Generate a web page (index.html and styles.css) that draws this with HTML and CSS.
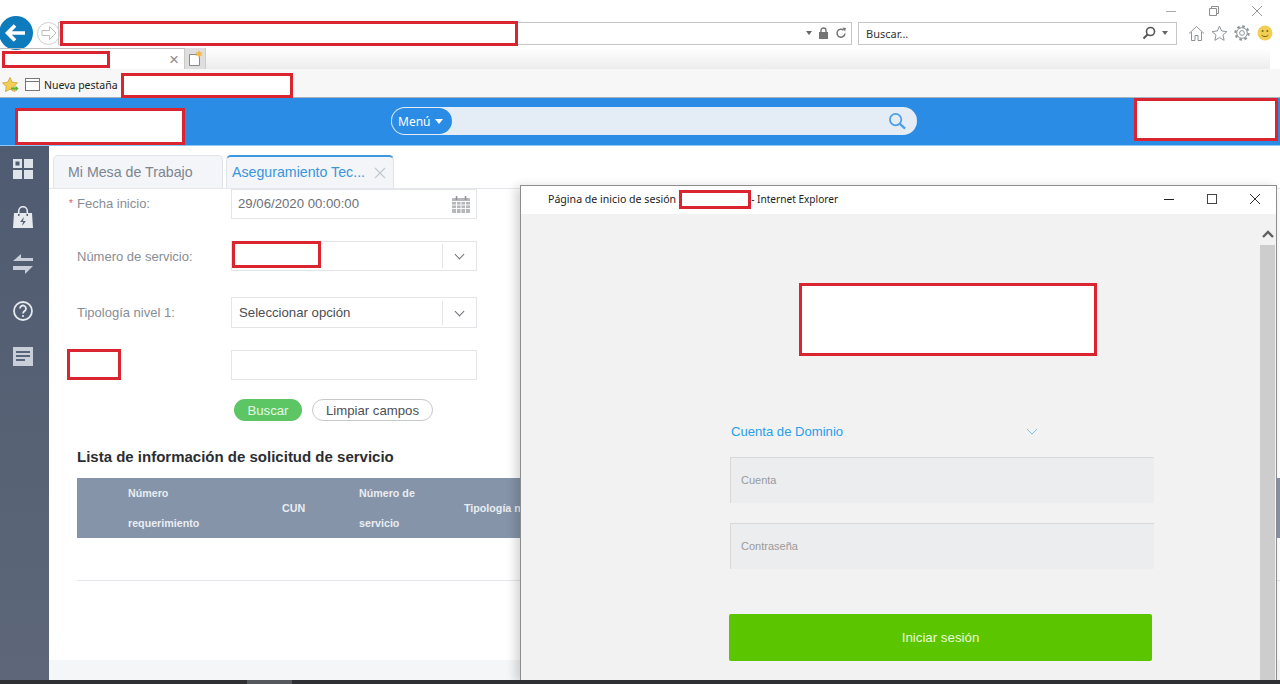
FILE: index.html
```html
<!DOCTYPE html>
<html lang="es">
<head>
<meta charset="utf-8">
<title>Aseguramiento Técnico</title>
<link rel="stylesheet" href="styles.css">
</head>
<body>
<div class="page">
  <header class="browser">
    <div class="win-row">
      <svg class="win-ic" width="12" height="12" viewBox="0 0 12 12"><path d="M1 6.5h10" stroke="#a9a9a9" fill="none"/></svg>
      <svg class="win-ic" width="12" height="12" viewBox="0 0 12 12"><path d="M1.5 3.5h7v7h-7zM3.5 3.5v-2h7v7h-2" stroke="#8e8e8e" fill="none"/></svg>
      <svg class="win-ic" width="12" height="12" viewBox="0 0 12 12"><path d="M1 1l10 10M11 1L1 11" stroke="#9a9a9a" fill="none"/></svg>
    </div>
    <div class="nav-row">
      <div class="back"><svg width="24" height="20" viewBox="0 0 24 20"><path d="M11 2.5L3.5 10l7.5 7.5M4 10h17" stroke="#fff" stroke-width="3.6" fill="none"/></svg></div>
      <div class="forward"><svg width="18" height="16" viewBox="0 0 18 16"><path d="M9.500 1.500L16 8l-6.500 6.500v-4H2v-5h7.500z" stroke="#bdbdbd" fill="none"/></svg></div>
      <div class="address">
        <span class="tri"></span>
        <svg width="11" height="12" viewBox="0 0 11 12"><path d="M3 5V3.500a2.500 2.500 0 0 1 5 0V5" stroke="#757575" stroke-width="1.4" fill="none"/><rect x="1" y="5" width="9" height="7" fill="#757575"/></svg>
        <svg width="12" height="12" viewBox="0 0 12 12"><path d="M10 6.500a4 4 0 1 1-1.400-3.400" stroke="#757575" stroke-width="1.5" fill="none"/><path d="M7.500 0.500l3.500 0.500-1 3.600z" fill="#757575"/></svg>
      </div>
      <div class="search-box">
        <span class="search-label">Buscar...</span>
        <svg width="14" height="14" viewBox="0 0 14 14"><circle cx="8.500" cy="5.500" r="4" stroke="#555" stroke-width="1.6" fill="none"/><path d="M5.500 8.500L1.500 12.500" stroke="#555" stroke-width="2"/></svg>
        <span class="tri"></span>
      </div>
      <div class="tools">
        <svg width="17" height="17" viewBox="0 0 17 17"><path d="M1 8.500L8.500 1.500 16 8.500M3.500 7v8.500h3.500v-5h3v5h3.500V7" stroke="#8d9499" fill="none"/></svg>
        <svg width="17" height="17" viewBox="0 0 17 17"><path d="M8.500 1.200l2.200 4.800 5.200.6-3.900 3.500 1.100 5.200-4.600-2.700-4.600 2.700 1.100-5.200L1.100 6.600l5.200-.6z" stroke="#8d9499" fill="none"/></svg>
        <svg width="16" height="16" viewBox="0 0 16 16"><circle cx="8" cy="8" r="6.600" stroke="#8d9499" stroke-width="2.200" stroke-dasharray="2.600 2.580" fill="none"/><circle cx="8" cy="8" r="5.300" stroke="#8d9499" fill="#fff"/><circle cx="8" cy="8" r="2.400" stroke="#8d9499" fill="none"/></svg>
        <svg width="16" height="16" viewBox="0 0 16 16"><circle cx="8" cy="8" r="7.500" fill="#f2cf52"/><circle cx="5.600" cy="6" r="1" fill="#7a6a20"/><circle cx="10.400" cy="6" r="1" fill="#7a6a20"/><path d="M4.500 10c1.500 2 5.500 2 7 0" stroke="#7a6a20" fill="none"/></svg>
      </div>
    </div>
    <div class="tab-row">
      <div class="tab"><span class="tab-close">×</span></div>
      <div class="tab-new"><svg width="15" height="17" viewBox="0 0 15 17"><path d="M1.500 4.500h10v11h-10z" fill="#fff" stroke="#8a8a8a"/><path d="M11 0l1 2.500 2.500-.5-1.500 2 1.500 2-2.500-.5-1 2.500-1-2.500-2.500.5 1.500-2-1.500-2 2.500.5z" fill="#f5b73c"/></svg></div>
      <div class="tab-fill"></div>
    </div>
    <div class="fav-row">
      <svg width="17" height="16" viewBox="0 0 17 16"><path d="M8 .5l2.300 4.700 5.200.7-3.800 3.600.9 5.100L8 12.200 3.400 14.600l.9-5.100L.5 5.900l5.200-.7z" fill="#f4cd55" stroke="#c79a2b" stroke-width=".7"/><path d="M9 10.500h4.500V8.500l3 3-3 3v-2H9z" fill="#5cb531"/></svg>
      <svg class="fav-page" width="15" height="13" viewBox="0 0 15 13"><rect x=".5" y=".5" width="14" height="12" fill="#fff" stroke="#777"/><path d="M.5 3.500h14" stroke="#777"/></svg>
      <span class="fav-text">Nueva pestaña</span>
    </div>
  </header>

  <div class="app-head">
    <div class="omni">
      <div class="menu-pill">Menú <span class="menu-tri"></span></div>
      <svg width="19" height="19" viewBox="0 0 20 20"><circle cx="8" cy="8" r="6" stroke="#4a9fe8" stroke-width="1.800" fill="none"/><path d="M12.500 12.500L18 17.500" stroke="#4a9fe8" stroke-width="2.400"/></svg>
    </div>
  </div>

  <div class="app-body">
    <nav class="side">
      <svg width="20" height="20" viewBox="0 0 20 20"><path d="M0 0h9v9H0zM2.500 2.500v4h4v-4zM11 0h9v9h-9zM0 11h9v9H0zM11 11h9v9h-9z" fill="#dfe3ea" fill-rule="evenodd"/></svg>
      <svg width="20" height="22" viewBox="0 0 20 22"><path d="M1 7h4v3h1.500V7h7v3H15V7h4l1 15H0z" fill="#e6e9ee"/><path d="M5.700 8V5a4.300 4.300 0 0 1 8.600 0v3" stroke="#e6e9ee" stroke-width="1.600" fill="none"/><path d="M11 11l-4 5h3l-1 4 4-5h-3z" fill="#58647a"/></svg>
      <svg width="20" height="20" viewBox="0 0 20 20"><path d="M8 0v4h12v3H0zM0 12h20l-8 8v-4H0z" fill="#c9ced8"/></svg>
      <svg width="20" height="20" viewBox="0 0 20 20"><circle cx="10" cy="10" r="9" stroke="#e6e9ee" stroke-width="1.800" fill="none"/><path d="M7 7.500a3 3 0 1 1 4.500 2.600c-1 .6-1.500 1-1.500 2.400" stroke="#e6e9ee" stroke-width="1.800" fill="none"/><circle cx="10" cy="15" r="1.100" fill="#e6e9ee"/></svg>
      <svg width="20" height="19" viewBox="0 0 20 19"><rect width="20" height="19" fill="#c9ced8"/><path d="M3 5h14M3 9h14M3 13h9" stroke="#58647a" stroke-width="1.800"/></svg>
    </nav>
    <main class="content">
      <div class="tabs">
        <div class="sub-tab">Mi Mesa de Trabajo</div>
        <div class="sub-tab sub-tab-active">Aseguramiento Tec...<svg width="12" height="12" viewBox="0 0 12 12"><path d="M1 1l10 10M11 1L1 11" stroke="#c3c8cf" stroke-width="1.200" fill="none"/></svg></div>
      </div>
      <form class="form">
        <div class="row row-date">
          <label class="lbl"><span class="req">*</span>Fecha inicio:</label>
          <div class="field field-date"><span>29/06/2020 00:00:00</span>
            <svg width="18" height="17" viewBox="0 0 18 17"><rect y="2" width="18" height="15" rx="1" fill="#b5b7ba"/><path d="M4.500 0v4M13.500 0v4" stroke="#8f9195" stroke-width="1.500"/><path d="M0 5.500h18M0 9h18M0 12.500h18M4.500 5v12M9 5v12M13.500 5v12" stroke="#fff" stroke-width=".9"/></svg>
          </div>
        </div>
        <div class="row row-num">
          <label class="lbl">Número de servicio:</label>
          <div class="field field-select"><span></span><i class="chev"></i></div>
        </div>
        <div class="row row-tip">
          <label class="lbl">Tipología nivel 1:</label>
          <div class="field field-select"><span class="sel-text">Seleccionar opción</span><i class="chev"></i></div>
        </div>
        <div class="row row-blank">
          <label class="lbl"></label>
          <div class="field"></div>
        </div>
        <div class="btns">
          <button type="button" class="btn-go">Buscar</button>
          <button type="button" class="btn-clear">Limpiar campos</button>
        </div>
      </form>
      <h2 class="list-title">Lista de información de solicitud de servicio</h2>
      <div class="thead">
        <div class="th th-first">Número<br>requerimiento</div>
        <div class="th">CUN</div>
        <div class="th">Número de<br>servicio</div>
        <div class="th th-last">Tipología nivel 2</div>
      </div>
      <div class="tbody"></div>
      <div class="foot"></div>
    </main>
  </div>
  <div class="taskbar"><span class="task-thumb"></span></div>

  <section class="login">
    <div class="login-title">
      <span class="login-caption">Página de inicio de sesión</span>
      <span class="login-caption login-caption-2">- Internet Explorer</span>
      <div class="login-win">
        <svg width="12" height="12" viewBox="0 0 12 12"><path d="M1 6.500h10" stroke="#222" fill="none"/></svg>
        <svg width="12" height="12" viewBox="0 0 12 12"><rect x="1.500" y="1.500" width="9" height="9" stroke="#444" fill="none"/></svg>
        <svg width="12" height="12" viewBox="0 0 12 12"><path d="M1 1l10 10M11 1L1 11" stroke="#333" fill="none"/></svg>
      </div>
    </div>
    <div class="login-body">
      <div class="login-form">
        <div class="domain"><span>Cuenta de Dominio</span><svg width="12" height="7" viewBox="0 0 12 7"><path d="M1 1l5 5 5-5" stroke="#7cc0ec" fill="none"/></svg></div>
        <div class="login-input">Cuenta</div>
        <div class="login-input login-input-2">Contraseña</div>
        <button type="button" class="login-btn">Iniciar sesión</button>
      </div>
      <div class="scroll">
        <svg width="12" height="8" viewBox="0 0 12 8"><path d="M1 7l5-5 5 5" stroke="#606060" stroke-width="2.400" fill="none"/></svg>
        <div class="scroll-thumb"></div>
      </div>
    </div>
  </section>

  <div class="mask mask-address"></div>
  <div class="mask mask-tab"></div>
  <div class="mask mask-fav"></div>
  <div class="mask mask-logo"></div>
  <div class="mask mask-user"></div>
  <div class="mask mask-num"></div>
  <div class="mask mask-label"></div>
  <div class="mask mask-title"></div>
  <div class="mask mask-login-logo"></div>
</div>
</body>
</html>
```

FILE: styles.css
```css
* { box-sizing: border-box; }
html, body { margin: 0; padding: 0; background: #fff; }
body { font-family: "Liberation Sans", Arial, sans-serif; overflow: hidden; }
.page { position: relative; width: 1280px; height: 684px; overflow: hidden; display: flex; flex-direction: column; }

/* Browser chrome */
.browser { height: 97px; flex: none; background: #fff; }
.win-row { height: 17px; display: flex; justify-content: flex-end; align-items: center; gap: 31px; padding: 4px 17px 0 0; }
.nav-row { height: 32px; display: flex; align-items: center; position: relative; }
.back { width: 34px; height: 34px; border-radius: 50%; background: #0e7bbd; margin-left: -1px; display: flex; align-items: center; justify-content: center; flex: none; }
.forward { width: 23px; height: 23px; border-radius: 50%; border: 1px solid #cfcfcf; margin-left: 4px; display: flex; align-items: center; justify-content: center; flex: none; background: #fff; }
.address { width: 794px; height: 23px; margin-left: -2px; border: 1px solid #c6c6c6; display: flex; align-items: center; justify-content: flex-end; gap: 6px; padding-right: 4px; flex: none; }
.tri { width: 0; height: 0; border-left: 3.500px solid transparent; border-right: 3.500px solid transparent; border-top: 4px solid #666; }
.search-box { width: 319px; height: 23px; margin-left: 6px; border: 1px solid #c6c6c6; display: flex; align-items: center; gap: 6px; padding: 0 8px 0 7px; flex: none; }
.search-label { flex: 1; font: 11px "Noto Sans", sans-serif; color: #333; }
.tools { display: flex; align-items: center; gap: 6px; margin-left: 11px; }
.tools svg:last-child { margin-left: 1px; }
.tab-row { height: 21px; margin-top: -1px; display: flex; }
.tab { width: 185px; border-top: 1px solid #bdbdbd; border-right: 1px solid #c9c9c9; position: relative; display: flex; align-items: center; justify-content: flex-end; padding-right: 5px; }
.tab-close { font: 17px/1 "Liberation Sans", sans-serif; color: #8c8c8c; }
.tab-new { width: 21px; background: #dedede; display: flex; align-items: center; justify-content: center; border-right: 1px solid #ccc; }
.tab-fill { flex: none; width: 1064px; background: linear-gradient(#fff, #ececec); }
.fav-row { height: 28px; background: #f7f7f7; display: flex; align-items: center; padding: 3px 0 0 2px; }
.fav-page { margin-left: 6px; }
.fav-text { font: 10.500px "Noto Sans", sans-serif; color: #222; margin-left: 4px; }

/* App header */
.app-head { height: 49px; flex: none; background: #2b8ce6; border-top: 1px solid #a9b4bf; border-bottom: 1px solid #8cc8fb; padding: 9px 0 0 391px; }
.omni { width: 526px; height: 28px; background: #e4edf6; border-radius: 14px; display: flex; align-items: center; justify-content: space-between; padding: 0 10px 0 1px; }
.menu-pill { width: 60px; height: 26px; border-radius: 13px; background: #2b8ce6; box-shadow: -1px 0 0 0 #bcdcf7; color: #fff; font: 12px "Noto Sans", sans-serif; display: flex; align-items: center; gap: 5px; padding-left: 6px; }
.menu-tri { width: 0; height: 0; border-left: 4px solid transparent; border-right: 4px solid transparent; border-top: 5px solid #fff; }

/* App body */
.app-body { flex: 1; min-height: 0; display: flex; }
.side { width: 49px; flex: none; background: linear-gradient(#4f5b70, #5d6779); display: flex; flex-direction: column; align-items: center; padding: 13px 0 0 0; gap: 26.500px; }
.side svg { margin-right: 3px; }
.content { flex: 1; min-width: 0; display: flex; flex-direction: column; }
.tabs { height: 43px; flex: none; display: flex; gap: 3px; padding: 9px 0 0 4px; border-bottom: 1px solid #e4e7eb; }
.sub-tab { width: 170px; height: 33px; border: 1px solid #dfe4ea; border-bottom: 0; border-radius: 5px 5px 0 0; background: #f3f5f8; color: #7d8590; font-size: 14.200px; line-height: 32px; padding-left: 14px; }
.sub-tab-active { width: 168px; border-top: 2px solid #3f97e0; color: #3a95dd; padding: 0 7px 0 5px; display: flex; align-items: center; justify-content: space-between; line-height: 1; white-space: nowrap; }
.form { padding-left: 28px; height: 252px; flex: none; }
.row { display: flex; align-items: center; }
.row-date .lbl { padding-bottom: 1px; }
.row-date .field span { padding-bottom: 1px; }
.row-num { margin-top: 22px; }
.row-tip { margin-top: 26px; }
.row-blank { margin-top: 22px; }
.lbl { width: 154px; flex: none; font-size: 13px; color: #888d95; position: relative; }
.req { position: absolute; left: -8px; top: 2px; color: #e2555f; font-size: 10px; }
.field { width: 246px; height: 30px; border: 1px solid #e3e5e8; background: #fff; font-size: 13.200px; color: #6d7076; display: flex; align-items: center; justify-content: space-between; }
.row-tip .field { height: 31px; }
.field-date { padding: 0 6px 0 6px; }
.field-select { padding-left: 7px; }
.sel-text { color: #4a4d52; }
.chev { width: 34px; height: 24px; border-left: 1px solid #e3e5e8; position: relative; flex: none; }
.chev::after { content: ""; position: absolute; left: 13px; top: 7px; width: 6px; height: 6px; border-right: 1px solid #6f7278; border-bottom: 1px solid #6f7278; transform: rotate(45deg); }
.btns { display: flex; gap: 10px; margin: 19px 0 0 157px; }
.btn-go, .btn-clear { height: 22px; border-radius: 11px; font: 13.200px "Liberation Sans", sans-serif; padding: 0; }
.btn-go { width: 68px; background: #5cc665; color: #e6f8e6; border: 0; }
.btn-clear { width: 121px; background: #fff; border: 1px solid #c8c8c8; color: #4c4f54; }
.list-title { margin: 4px 0 0 28px; height: 23px; font-size: 15px; line-height: 23px; font-weight: 700; color: #2b2e33; flex: none; }
.thead { margin: 10px 0 0 28px; height: 60px; flex: none; background: #8594a9; display: grid; grid-template-columns: 205px 77px 105px 1fr; align-items: center; overflow: hidden; }
.th { font-size: 10.700px; font-weight: 700; line-height: 30px; color: #e9edf2; white-space: nowrap; }
.th-first { padding-left: 51px; }
.tbody { height: 43px; flex: none; margin-left: 28px; border-bottom: 1px solid #e4e7eb; }
.foot { margin-top: 79px; flex: 1; background: #f4f6f8; }
.taskbar { height: 4px; flex: none; background: #2d2f33; padding-left: 247px; position: relative; z-index: 2; }
.task-thumb { display: block; width: 45px; height: 4px; background: #55585c; }

/* Login popup window */
.login { position: absolute; left: 520px; top: 185px; width: 757px; height: 495px; background: #f2f2f2; border: 1px solid #8d8d8d; border-bottom: 0; box-shadow: -4px 2px 10px rgba(0,0,0,.18); display: flex; flex-direction: column; }
.login-title { height: 28px; flex: none; background: #fff; display: flex; align-items: center; padding: 0 0 2px 27px; position: relative; }
.login-caption { font: 10.600px "Noto Sans", sans-serif; color: #222; }
.login-caption-2 { margin-left: 75px; font-size: 10.100px; }
.login-win { margin-left: auto; display: flex; gap: 31px; padding-right: 15px; }
.login-body { flex: 1; display: flex; min-height: 0; }
.login-form { width: 739px; padding: 209px 0 0 207px; flex: none; }
.domain { display: flex; align-items: center; width: 310px; justify-content: space-between; font-size: 13.100px; color: #26a0ea; height: 16px; padding-left: 3px; }
.login-input { width: 424px; height: 46px; margin: 18px 0 0 2px; background: #ecedef; border-top: 1px solid #d8d8d8; border-left: 1px solid #d8d8d8; font-size: 11px; color: #9a9a9a; line-height: 44px; padding-left: 10px; }
.login-input-2 { margin-top: 20px; }
.login-btn { display: block; width: 423px; height: 47px; margin: 45px 0 0 1px; background: #5bc500; border: 0; border-radius: 2px; color: #e9f9d8; font: 13.300px "Liberation Sans", sans-serif; }
.scroll { width: 15px; flex: none; display: flex; flex-direction: column; align-items: center; padding-top: 16px; }
.scroll-thumb { width: 15px; flex: 1; margin-top: 7px; background: #cdcdcd; }

/* Redaction boxes drawn over the capture */
.mask { position: absolute; background: #fff; border: 3px solid #da2530; }
.mask-address { left: 60px; top: 21px; width: 458px; height: 25px; }
.mask-tab { left: 2px; top: 51px; width: 108px; height: 17px; }
.mask-fav { left: 121px; top: 73px; width: 172px; height: 25px; }
.mask-logo { left: 15px; top: 108px; width: 170px; height: 37px; }
.mask-user { left: 1134px; top: 98px; width: 144px; height: 43px; }
.mask-num { left: 232px; top: 241px; width: 89px; height: 27px; }
.mask-label { left: 67px; top: 349px; width: 54px; height: 31px; }
.mask-title { left: 679px; top: 190px; width: 72px; height: 19px; }
.mask-login-logo { left: 799px; top: 283px; width: 298px; height: 73px; }
```
